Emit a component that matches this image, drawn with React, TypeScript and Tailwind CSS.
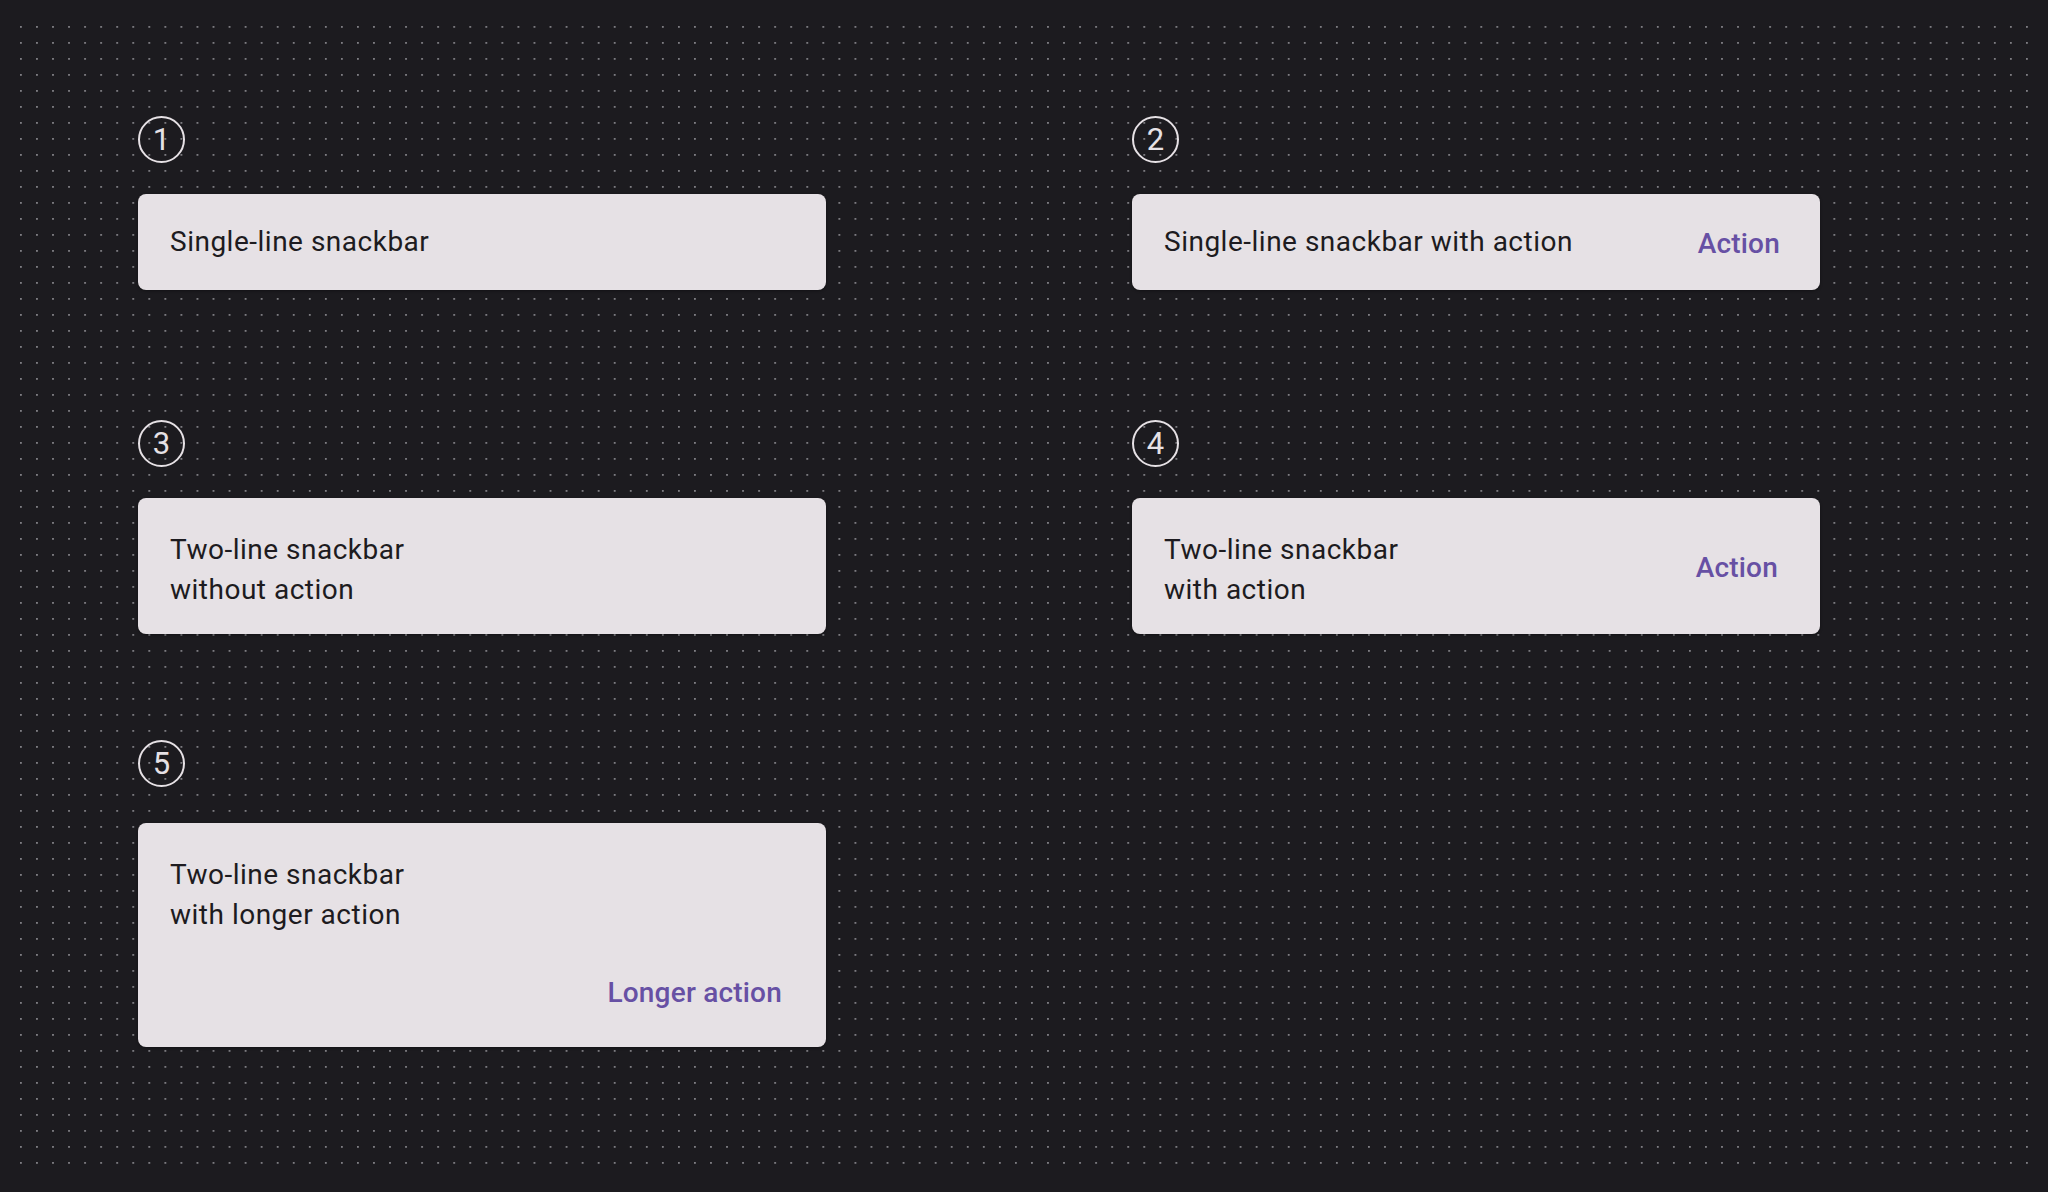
import React from "react";

function Badge({ n }: { n: number }) {
  return (
    <div className="flex h-[47px] w-[47px] items-center justify-center rounded-full border-2 border-[#e6e1e5] text-[31px] leading-none text-[#e6e1e5]">
      {n}
    </div>
  );
}

const cardBase =
  "w-[688px] rounded-[8px] bg-[#e6e1e5] shadow-[0_1px_3px_rgba(0,0,0,0.35)] text-[28px] leading-[40px] tracking-[0.5px] text-[#1d1b20]";
const actionCls =
  "text-[28px] leading-[40px] font-medium tracking-[0.2px] text-[#6750a4]";

export default function App() {
  return (
    <div className="relative h-[1192px] w-full overflow-hidden bg-[#1c1b1f] font-['Roboto',sans-serif]">
      <svg
        className="pointer-events-none absolute left-0 top-0"
        width={2048}
        height={1192}
      >
        <defs>
          <pattern
            id="dots"
            x={20}
            y={26}
            width={16.048}
            height={16}
            patternUnits="userSpaceOnUse"
          >
            <rect x={0} y={0} width={1.8} height={1.8} fill="#807f84" />
          </pattern>
        </defs>
        <rect x={19} y={25} width={2012} height={1142} fill="url(#dots)" />
      </svg>

      <div className="relative flex flex-col pl-[138px] pt-[116px]">
        {/* Row 1 */}
        <div className="flex gap-[306px]">
          <div className="flex w-[688px] flex-col">
            <Badge n={1} />
            <div className={`${cardBase} mt-[31px] flex h-[96px] items-center pl-[32px]`}>
              Single-line snackbar
            </div>
          </div>
          <div className="flex w-[688px] flex-col">
            <Badge n={2} />
            <div
              className={`${cardBase} mt-[31px] flex h-[96px] items-center justify-between pl-[32px] pr-[40px]`}
            >
              <span>Single-line snackbar with action</span>
              <span className={`${actionCls} mt-[3px]`}>Action</span>
            </div>
          </div>
        </div>

        {/* Row 2 */}
        <div className="mt-[130px] flex gap-[306px]">
          <div className="flex w-[688px] flex-col">
            <Badge n={3} />
            <div className={`${cardBase} mt-[31px] flex h-[136px] items-center pl-[32px]`}>
              <div className="mt-[8px]">
                Two-line snackbar
                <br />
                without action
              </div>
            </div>
          </div>
          <div className="flex w-[688px] flex-col">
            <Badge n={4} />
            <div
              className={`${cardBase} mt-[31px] flex h-[136px] items-center justify-between pl-[32px] pr-[42px]`}
            >
              <div className="mt-[8px]">
                Two-line snackbar
                <br />
                with action
              </div>
              <span className={`${actionCls} mt-[4px]`}>Action</span>
            </div>
          </div>
        </div>

        {/* Row 3 */}
        <div className="mt-[106px] flex gap-[306px]">
          <div className="flex w-[688px] flex-col">
            <Badge n={5} />
            <div
              className={`${cardBase} mt-[36px] flex h-[224px] flex-col justify-between pb-[34px] pl-[32px] pr-[44px] pt-[32px]`}
            >
              <div>
                Two-line snackbar
                <br />
                with longer action
              </div>
              <span className={`${actionCls} self-end`}>Longer action</span>
            </div>
          </div>
        </div>
      </div>
    </div>
  );
}
